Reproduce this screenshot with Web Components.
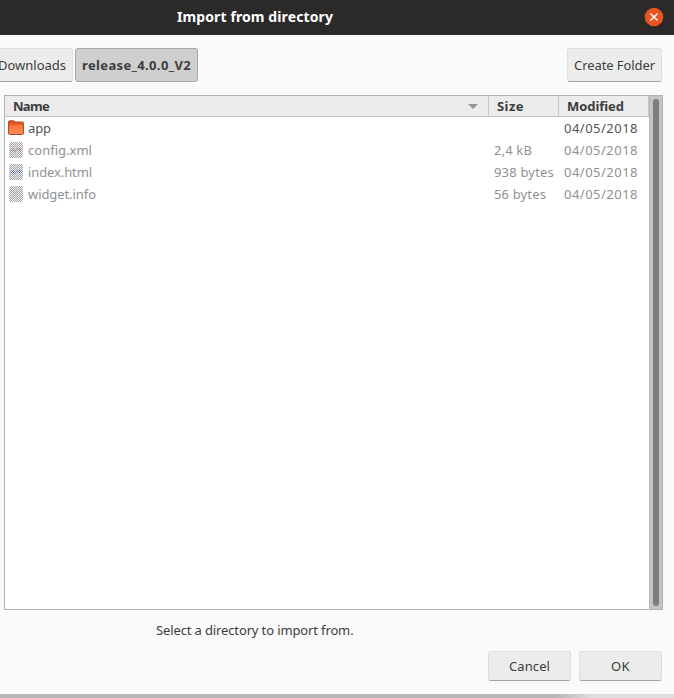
<!DOCTYPE html>
<html lang="en"><head><meta charset="utf-8"><title>Import from directory</title>
<style>
html,body{margin:0;height:100%;overflow:hidden}
body{font:13px/20px "Noto Sans","Open Sans",sans-serif;color:#3d3d3d;background:#fafafa}
</style></head><body>
<import-dialog></import-dialog>
<script>
function define(name, markup, ready) {
  const t = document.createElement('template');
  t.innerHTML = markup;
  customElements.define(name, class extends HTMLElement {
    connectedCallback() {
      if (this.shadowRoot) return;
      this.attachShadow({mode: 'open'}).append(t.content.cloneNode(true));
      if (ready) ready.call(this, this.shadowRoot);
    }
  });
}
// A label whose tracking is tuned so that its text spans the width in the "span" attribute.
define('ui-label', `<style>:host{display:inline-block;white-space:nowrap}span{display:inline-block}</style><span><slot></slot></span>`, function (root) {
  const s = root.querySelector('span'), w = +this.getAttribute('span');
  const n = this.textContent.length;
  this.style.letterSpacing = ((w - s.getBoundingClientRect().width) / n) + 'px';
  this.style.width = w + 'px';
});
define('close-button', `<style>:host{display:block;width:20px;height:20px}svg{display:block}</style>
<svg width="20" height="20" viewBox="0 0 20 20"><circle cx="10" cy="10" r="9.3" fill="#e95420"/><path d="M6.4 6.4l7.2 7.2M13.6 6.4l-7.2 7.2" stroke="#fff" stroke-width="1.4"/></svg>`);
define('title-bar', `<style>:host{display:flex;height:35px;background:#2c2929;color:#fff;align-items:center;font-weight:700;font-size:14px;box-sizing:border-box;padding:0 10px 0 177px;justify-content:space-between}close-button{margin-top:-1px}::slotted(ui-label){margin-top:-1px}</style>
<slot></slot><close-button></close-button>`);
define('push-button', `<style>:host{display:flex;box-sizing:border-box;align-items:center;justify-content:center;height:34px;border:1px solid #dedede;border-bottom-color:#a2a2a2;border-radius:3px;background:#ececec;flex:none}
:host([pressed]){background:#cfcfcf;border-color:#a6a6a6;font-weight:700}:host([small]){height:30px;width:83px}</style><slot></slot>`);
define('file-icon', `<style>:host{display:block;width:16px;height:16px;flex:none}svg{display:block}</style><svg width="16" height="16" viewBox="0 0 16 16"></svg>`, function (root) {
  const k = this.getAttribute('kind');
  let g;
  if (k === 'folder') {
    g = `<defs><linearGradient id="f" x2="0" y2="1"><stop stop-color="#fa7138"/><stop offset="1" stop-color="#fb8b55"/></linearGradient></defs>
    <path d="M.5 3V2Q.5.8 1.7.8h4.1l1.4 1.2h7Q15.5 2 15.5 3.2v10q0 1.3-1.3 1.3H1.8Q.5 14.5.5 13.2z" fill="#e95420" stroke="#ac4a27"/>
    <path d="M1 5.5q0-.9.9-.9h4.4l1-.8h6.8q.9 0 .9.9V13q0 1-.9 1H1.9Q1 14 1 13z" fill="url(#f)"/><path d="M1.5 5.1h5l1-.8H15" fill="none" stroke="#d45125" stroke-width=".7"/>`;
  } else {
    const c = {xml: '#8b5068', html: '#3465a4'}[k];
    // Dithered page: every second pixel is shaded, the corners stay clear.
    let d = '';
    for (let y = 0; y < 16; y++) for (let x = 1; x < 15; x++)
      if ((x + y) % 2 && !((x === 1 || x === 14) && (y === 0 || y === 15))) d += `M${x} ${y}h1v1h-1z`;
    const dots = k === 'info' ? [] : [[5,6],[4,7],[3,8],[5,8],[7,8],[8,7],[9,6],[10,7],[11,6],[12,7],[11,8],[6,9]];
    g = `<rect x="1" width="14" height="16" rx="1.5" fill="#ededed"/><path d="${d}" fill="#a9a9a9" shape-rendering="crispEdges"/>` +
      dots.map(([x, y]) => `<rect x="${x}" y="${y}" width="1" height="1" fill="${c}" opacity=".85"/>`).join('');
    if (k === 'info') g += `<path d="M5 6h1v1H5zM7 6h1v1H7zM9 6h1v1H9zM6 9h1v1H6zM8 9h1v1H8z" fill="#909090"/>`;
  }
  root.querySelector('svg').innerHTML = g;
});
define('file-row', `<style>:host{display:grid;grid-template-columns:489px 70px 1fr;height:22px;align-items:center;color:#8f9191}:host([active]){color:#545454}
.name{display:flex;align-items:center;gap:4px;padding-left:3px}</style>
<div class="name"><slot name="icon"></slot><slot name="name"></slot></div><div><slot name="size"></slot></div><div><slot name="date"></slot></div>`);
define('column-heads', `<style>:host{display:grid;grid-template-columns:484px 70px 1fr;height:21px;box-sizing:border-box;background:#ececec;border-bottom:1px solid #c6c6c6;font-weight:700}
div{display:flex;align-items:center;justify-content:space-between;border-right:1px solid #c6c6c6;padding:0 10px 0 8px}svg{display:block}</style>
<div><ui-label span="36">Name</ui-label><svg width="10" height="5"><path d="M0 0h10L5 5z" fill="#929595"/></svg></div><div><ui-label span="27">Size</ui-label></div><div><ui-label span="57">Modified</ui-label></div>`);
define('scroll-bar', `<style>:host{display:flex;justify-content:center;box-sizing:border-box;width:13px;background:#c3c5c3;border-left:1px solid #b8bab8;padding:3px 0 3px}i{width:6px;border-radius:3px;background:#7a7e7e}</style><i></i>`);
define('file-list', `<style>:host{display:flex;box-sizing:border-box;width:659px;height:515px;margin:13px 0 0 4px;border:1px solid #b3b3b1;background:#fff}.main{flex:1}</style>
<div class="main"><column-heads></column-heads><slot></slot></div><scroll-bar></scroll-bar>`);
define('import-dialog', `<style>:host{display:flex;flex-direction:column;width:674px;height:698px;background:#fafafa}
.path{display:flex;gap:2px;padding:13px 12px 0 0}.down{width:82px;margin-left:-9px}.rel{width:123px}.new{width:95px;margin-left:auto}
.msg{margin:10px 0 0 156px;height:20px}.actions{display:flex;justify-content:flex-end;gap:8px;padding:11px 12px 0 0}
.shade{margin-top:auto;height:4px;background:linear-gradient(90deg,#b7b7b7 0,#b7b7b7 556px,#dedede 592px)}</style>
<title-bar><ui-label span="156">Import from directory</ui-label></title-bar>
<div class="path"><push-button class="down"><ui-label span="68">Downloads</ui-label></push-button><push-button class="rel" pressed><ui-label span="109">release_4.0.0_V2</ui-label></push-button><push-button class="new"><ui-label span="81">Create Folder</ui-label></push-button></div>
<file-list>
<file-row active><file-icon slot="icon" kind="folder"></file-icon><ui-label slot="name" span="23">app</ui-label><ui-label slot="date" span="74">04/05/2018</ui-label></file-row>
<file-row><file-icon slot="icon" kind="xml"></file-icon><ui-label slot="name" span="64">config.xml</ui-label><ui-label slot="size" span="38">2,4 kB</ui-label><ui-label slot="date" span="74">04/05/2018</ui-label></file-row>
<file-row><file-icon slot="icon" kind="html"></file-icon><ui-label slot="name" span="64">index.html</ui-label><ui-label slot="size" span="60">938 bytes</ui-label><ui-label slot="date" span="74">04/05/2018</ui-label></file-row>
<file-row><file-icon slot="icon" kind="info"></file-icon><ui-label slot="name" span="68">widget.info</ui-label><ui-label slot="size" span="52">56 bytes</ui-label><ui-label slot="date" span="74">04/05/2018</ui-label></file-row>
</file-list>
<div class="msg"><ui-label span="197.5">Select a directory to import from.</ui-label></div>
<div class="actions"><push-button small><ui-label span="41">Cancel</ui-label></push-button><push-button small><ui-label span="19">OK</ui-label></push-button></div>
<div class="shade"></div>`);
</script></body></html>
